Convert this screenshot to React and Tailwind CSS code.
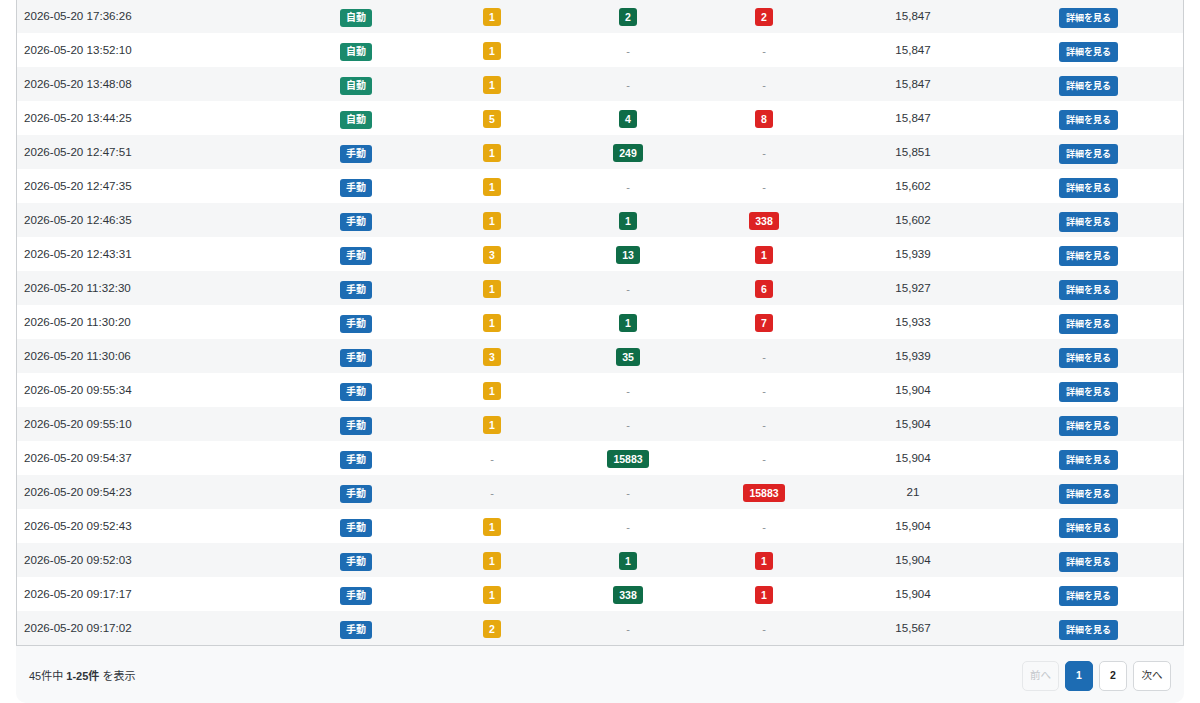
import React from "react";

const rows = [
  ["2026-05-20 17:36:26", "auto", "1", "2", "2", "15,847"],
  ["2026-05-20 13:52:10", "auto", "1", "-", "-", "15,847"],
  ["2026-05-20 13:48:08", "auto", "1", "-", "-", "15,847"],
  ["2026-05-20 13:44:25", "auto", "5", "4", "8", "15,847"],
  ["2026-05-20 12:47:51", "manual", "1", "249", "-", "15,851"],
  ["2026-05-20 12:47:35", "manual", "1", "-", "-", "15,602"],
  ["2026-05-20 12:46:35", "manual", "1", "1", "338", "15,602"],
  ["2026-05-20 12:43:31", "manual", "3", "13", "1", "15,939"],
  ["2026-05-20 11:32:30", "manual", "1", "-", "6", "15,927"],
  ["2026-05-20 11:30:20", "manual", "1", "1", "7", "15,933"],
  ["2026-05-20 11:30:06", "manual", "3", "35", "-", "15,939"],
  ["2026-05-20 09:55:34", "manual", "1", "-", "-", "15,904"],
  ["2026-05-20 09:55:10", "manual", "1", "-", "-", "15,904"],
  ["2026-05-20 09:54:37", "manual", "-", "15883", "-", "15,904"],
  ["2026-05-20 09:54:23", "manual", "-", "-", "15883", "21"],
  ["2026-05-20 09:52:43", "manual", "1", "-", "-", "15,904"],
  ["2026-05-20 09:52:03", "manual", "1", "1", "1", "15,904"],
  ["2026-05-20 09:17:17", "manual", "1", "338", "1", "15,904"],
  ["2026-05-20 09:17:02", "manual", "2", "-", "-", "15,567"],
];

const font = { fontFamily: '"Liberation Sans", "Noto Sans CJK JP", sans-serif' };

function Badge({ value, color }) {
  if (value === "-") {
    return <span className="text-[11px] text-[#8a9096]">-</span>;
  }
  return (
    <span
      className={`inline-flex h-[18px] items-center justify-center rounded-[3px] px-[6px] text-[10.5px] font-bold leading-none text-white ${color}`}
    >
      {value}
    </span>
  );
}

export default function App() {
  return (
    <div className="min-h-[703px] overflow-hidden bg-white" style={font}>
      <div className="-mt-px px-[16px]">
        <div className="overflow-hidden rounded-b-[10px] bg-[#f8f9fa]">
          <div className="border-x border-b border-[#cdd0d3] bg-white">
            <table className="w-full table-fixed border-collapse">
              <colgroup>
                <col className="w-[271px]" />
                <col className="w-[136px]" />
                <col className="w-[136px]" />
                <col className="w-[136px]" />
                <col className="w-[136px]" />
                <col className="w-[162px]" />
                <col />
              </colgroup>
              <tbody>
                {rows.map((r, i) => (
                  <tr key={i} className={`h-[34px] ${i % 2 === 0 ? "bg-[#f5f6f7]" : "bg-white"}`}>
                    <td className="pl-[7px] text-[11.6px] text-[#2f353b]">{r[0]}</td>
                    <td className="text-center">
                      {r[1] === "auto" ? (
                        <span className="inline-flex h-[18px] items-center justify-center rounded-[3px] bg-[#1a8a6c] px-[6px] text-[10px] font-bold leading-none text-white">
                          自動
                        </span>
                      ) : (
                        <span className="inline-flex h-[18px] items-center justify-center rounded-[3px] bg-[#1d6cb3] px-[6px] text-[10px] font-bold leading-none text-white">
                          手動
                        </span>
                      )}
                    </td>
                    <td className="text-center">
                      <Badge value={r[2]} color="bg-[#e6a80f]" />
                    </td>
                    <td className="text-center">
                      <Badge value={r[3]} color="bg-[#0f6d48]" />
                    </td>
                    <td className="text-center">
                      <Badge value={r[4]} color="bg-[#dd2323]" />
                    </td>
                    <td className="text-center text-[11.6px] text-[#2f353b]">{r[5]}</td>
                    <td className="text-center">
                      <button className="inline-flex h-[20px] items-center justify-center rounded-[3px] bg-[#1d6cb3] px-[7px] text-[9px] font-bold leading-none text-white">
                        詳細を見る
                      </button>
                    </td>
                  </tr>
                ))}
              </tbody>
            </table>
          </div>
          <div className="flex items-center justify-between pb-[12px] pl-[13px] pr-[13px] pt-[15px]">
            <div className="text-[11px] text-[#2f353b]">
              45件中 <span className="font-bold">1-25件</span> を表示
            </div>
            <div className="flex items-center gap-[6px]">
              <button className="flex h-[30px] w-[37px] items-center justify-center rounded-[5px] border border-[#e6e8ea] bg-[#f8f9fa] text-[10.5px] text-[#c4c8cc]">
                前へ
              </button>
              <button className="flex h-[30px] w-[28px] items-center justify-center rounded-[5px] border border-[#1d6cb3] bg-[#1d6cb3] text-[10.5px] font-bold text-white">
                1
              </button>
              <button className="flex h-[30px] w-[28px] items-center justify-center rounded-[5px] border border-[#d5d8db] bg-white text-[10.5px] font-bold text-[#222]">
                2
              </button>
              <button className="flex h-[30px] w-[38px] items-center justify-center rounded-[5px] border border-[#d5d8db] bg-white text-[10.5px] text-[#333]">
                次へ
              </button>
            </div>
          </div>
        </div>
      </div>
    </div>
  );
}
